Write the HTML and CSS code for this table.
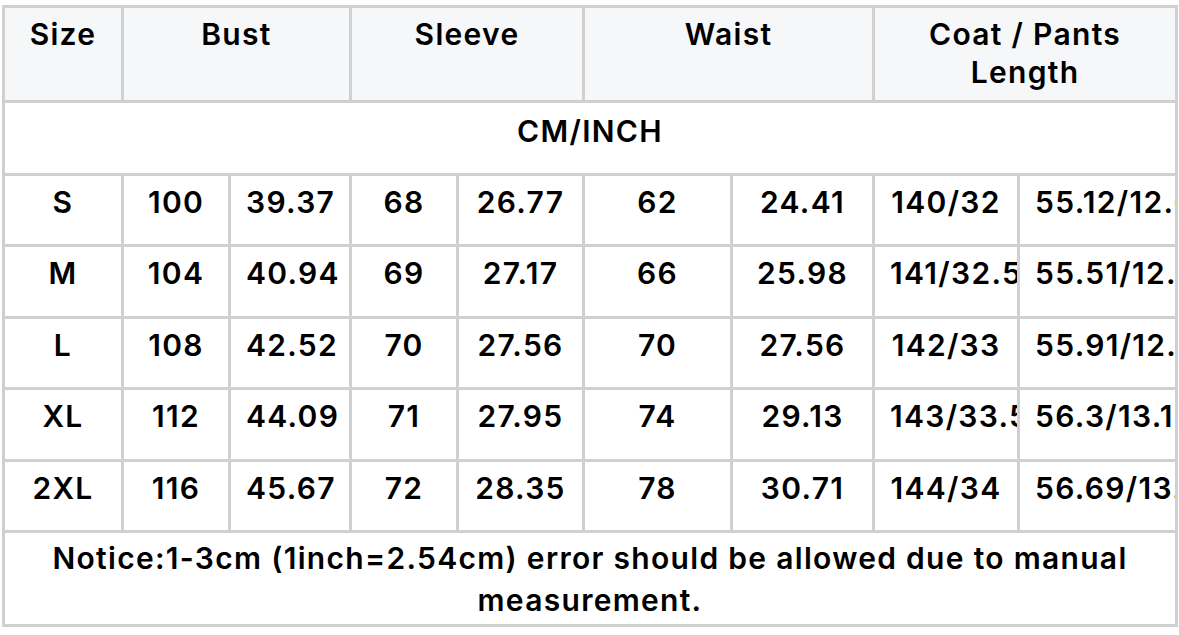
FILE: index.html
```html
<!DOCTYPE html>
<html>
<head>
<meta charset="utf-8">
<link rel="stylesheet" href="styles.css">
</head>
<body>
<table class="size-table">
  <colgroup>
    <col class="c1"><col class="c2"><col class="c3"><col class="c4"><col class="c5"><col class="c6"><col class="c7"><col class="c8"><col class="c9">
  </colgroup>
  <thead>
    <tr class="head-row">
      <th>Size</th>
      <th colspan="2">Bust</th>
      <th colspan="2">Sleeve</th>
      <th colspan="2">Waist</th>
      <th colspan="2">Coat / Pants<br>Length</th>
    </tr>
  </thead>
  <tbody>
    <tr class="unit-row"><td colspan="9">CM/INCH</td></tr>
    <tr class="row-a"><td>S</td><td>100</td><td>39.37</td><td>68</td><td>26.77</td><td>62</td><td>24.41</td><td>140/32</td><td>55.12/12.6</td></tr>
    <tr class="row-b"><td>M</td><td>104</td><td>40.94</td><td>69</td><td>27.17</td><td>66</td><td>25.98</td><td>141/32.5</td><td>55.51/12.8</td></tr>
    <tr class="row-a"><td>L</td><td>108</td><td>42.52</td><td>70</td><td>27.56</td><td>70</td><td>27.56</td><td>142/33</td><td>55.91/12.99</td></tr>
    <tr class="row-b"><td>XL</td><td>112</td><td>44.09</td><td>71</td><td>27.95</td><td>74</td><td>29.13</td><td>143/33.5</td><td>56.3/13.19</td></tr>
    <tr class="row-a"><td>2XL</td><td>116</td><td>45.67</td><td>72</td><td>28.35</td><td>78</td><td>30.71</td><td>144/34</td><td>56.69/13.39</td></tr>
    <tr class="notice-row"><td colspan="9">Notice:1-3cm (1inch=2.54cm) error should be allowed due to manual measurement.</td></tr>
  </tbody>
</table>
</body>
</html>
```

FILE: styles.css
```css
html, body {
  margin: 0;
  padding: 0;
  background: #ffffff;
}

body {
  padding: 5px 0 0 2px;
  font-family: Inter, "Noto Sans", "Liberation Sans", sans-serif;
  color: #000000;
}

.size-table {
  border-collapse: separate;
  border-spacing: 0;
  table-layout: fixed;
  width: 1176px;
  border-top: 3px solid #d0d0d0;
  border-left: 3px solid #d0d0d0;
}

.c1 { width: 119px; }
.c2 { width: 107px; }
.c3 { width: 121px; }
.c4 { width: 107px; }
.c5 { width: 126px; }
.c6 { width: 148px; }
.c7 { width: 142px; }
.c8 { width: 145px; }
.c9 { width: 158px; }

.size-table th,
.size-table td {
  border-right: 3px solid #d0d0d0;
  border-bottom: 3px solid #d0d0d0;
  padding: 6px 15px 0;
  font-size: 30px;
  font-weight: 600;
  letter-spacing: 1.3px;
  line-height: 38px;
  text-align: center;
  vertical-align: top;
  white-space: nowrap;
  overflow: hidden;
  box-sizing: border-box;
}

.head-row th {
  background: #f6f7f9;
  height: 95px;
  padding-top: 7px;
}

.unit-row td {
  height: 73px;
  padding-top: 9px;
}

.row-a td { height: 71px; }
.row-b td { height: 72px; }

.row-b td,
.row-a td { padding-top: 7px; }

.notice-row td {
  height: 94px;
  white-space: normal;
  padding: 4px 20px 0;
  line-height: 42px;
}
```
